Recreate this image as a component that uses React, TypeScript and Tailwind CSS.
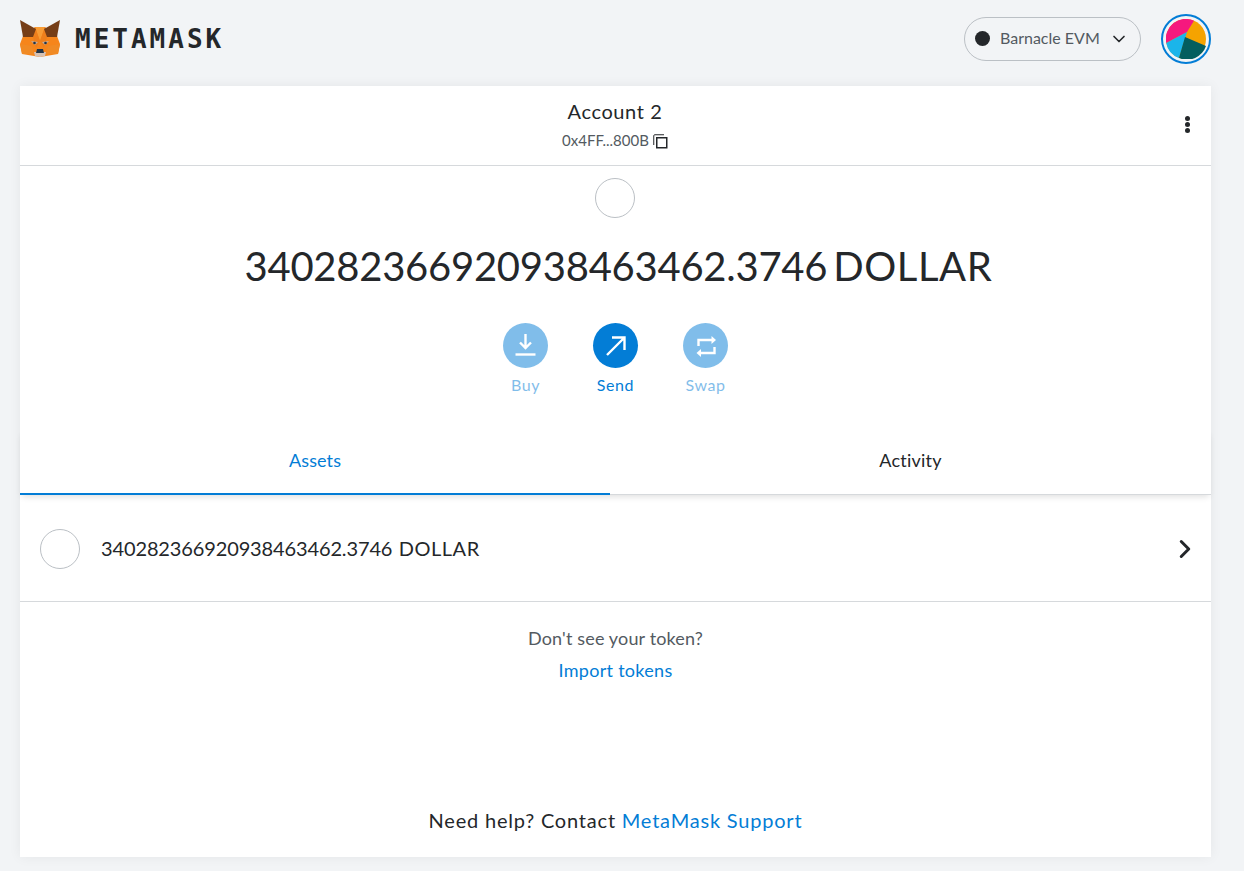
import { ChevronDown, ChevronRight } from 'lucide-react';

function FoxLogo() {
    return (
        <svg width="41" height="39" viewBox="0 0 41 39" className="shrink-0">
            {/* face */}
            <polygon points="3,17 15,8 25,8 37,17 40,25 38,35 26,37 20,38 14,37 2,35 0,25" fill="#f6851b" />
            <polygon points="15,8 25,8 20,22" fill="#f89c35" />
            <polygon points="13,18 15,8 20,22 16,29" fill="#ee7f1c" />
            <polygon points="27,18 25,8 20,22 24,29" fill="#ee7f1c" />
            <polygon points="0,25 12,27 14,35 2,35" fill="#f08a24" />
            <polygon points="40,25 28,27 26,35 38,35" fill="#f08a24" />
            {/* ears */}
            <polygon points="0,1 16,10 13,18 3,18" fill="#763d16" />
            <polygon points="40,1 24,10 27,18 37,18" fill="#763d16" />
            {/* eyes */}
            <polygon points="11,22 18,23 15,26" fill="#c0ad9e" />
            <polygon points="29,22 22,23 25,26" fill="#c0ad9e" />
            <circle cx="14.5" cy="24" r="1.3" fill="#233447" />
            <circle cx="25.5" cy="24" r="1.3" fill="#233447" />
            {/* muzzle */}
            <polygon points="14,33 26,33 25,37 20,38 15,37" fill="#d7c1b3" />
            <polygon points="16,34 24,34 23,30 17,30" fill="#233447" />
        </svg>
    );
}

function ActionButton({ label, active, children }: { label: string; active?: boolean; children: React.ReactNode }) {
    return (
        <div className={`flex w-[90px] flex-col items-center ${active ? '' : 'opacity-50'}`}>
            <div className="flex h-[45px] w-[45px] items-center justify-center rounded-full bg-[#037dd6]">
                {children}
            </div>
            <span className="mt-[6px] text-[16px] leading-[22px] tracking-[0.6px] text-[#037dd6]">{label}</span>
        </div>
    );
}

export default function App() {
    return (
        <div className="min-h-[871px] bg-[#f2f4f6] px-[20px] font-['Lato',sans-serif] text-[#24272a]">
            {/* top bar */}
            <header className="flex h-[86px] w-[1191px] items-center justify-between pb-[9px]">
                <div className="flex items-center gap-[14px]">
                    <FoxLogo />
                    <span className="mt-[1px] font-['DejaVu_Sans_Mono',monospace] text-[26px] font-bold leading-none tracking-[3px] text-[#24272a]">
                        METAMASK
                    </span>
                </div>
                <div className="flex items-center gap-[20px]">
                    <div className="flex h-[44px] w-[177px] items-center rounded-full border border-[#bbc0c5] pl-[10px] pr-[11px]">
                        <span className="h-[15px] w-[15px] rounded-full bg-[#24272a]" />
                        <span className="ml-[10px] flex-1 pb-[2px] text-[16px] text-[#535a61]">Barnacle EVM</span>
                        <ChevronDown className="h-[20px] w-[20px]" strokeWidth={2} />
                    </div>
                    <div className="flex h-[50px] w-[50px] items-center justify-center rounded-full border-2 border-[#037dd6]">
                        <svg width="40" height="40" viewBox="0 0 40 40">
                            <circle cx="20" cy="20" r="20" fill="#f5a300" />
                            <path d="M0.2 24 A20 20 0 0 1 28 1.7 L21 13 Z" fill="#f6187e" />
                            <path d="M0.2 24 L21 13 L13 39 A20 20 0 0 1 0.2 24 Z" fill="#1bb5ea" />
                            <path d="M13 39 L19 18 L40 27 A20 20 0 0 1 13 39 Z" fill="#035e5e" />
                        </svg>
                    </div>
                </div>
            </header>

            {/* main card */}
            <main className="flex h-[771px] w-[1191px] flex-col bg-white shadow-[0_0_12px_rgba(0,0,0,0.06)]">
                <div className="relative flex h-[80px] shrink-0 flex-col items-center border-b border-[#d6d9dc] pr-[1px] pt-[11px]">
                    <span className="text-[20px] leading-[28px] tracking-[0.6px]">Account 2</span>
                    <div className="mt-[5px] flex items-center gap-[4px] text-[15px] leading-[20px] text-[#535a61]">
                        <span>0x4FF...800B</span>
                        <svg width="15" height="15" viewBox="0 0 15 15" fill="none" stroke="#24272a" className="mt-[2px]">
                            <rect x="3.75" y="3.75" width="10" height="10" strokeWidth="1.5" />
                            <path d="M0.75 11V1.75A1 1 0 0 1 1.75 .75H11" strokeWidth="1" />
                        </svg>
                    </div>
                    <div className="absolute right-[21px] top-[30px] flex flex-col gap-[1px]">
                        <span className="h-[5px] w-[5px] rounded-full bg-[#24272a]" />
                        <span className="h-[5px] w-[5px] rounded-full bg-[#24272a]" />
                        <span className="h-[5px] w-[5px] rounded-full bg-[#24272a]" />
                    </div>
                </div>

                <div className="flex h-[263px] shrink-0 flex-col items-center pt-[12px]">
                    <div className="mr-[1px] h-[40px] w-[40px] rounded-full border border-[#bbc0c5]" />
                    <div className="mt-[24px] pl-[6px] text-[40px] leading-[48px] tracking-[-0.26px] [word-spacing:-4px]">
                        340282366920938463462.3746 <span className="tracking-[0.6px]">DOLLAR</span>
                    </div>
                    <div className="mt-[33px] flex">
                        <ActionButton label="Buy">
                            <svg width="22" height="24" viewBox="0 0 22 24" fill="none" stroke="white" strokeWidth="2.4">
                                <path d="M10.5 0V14M5 8.5L10.5 14L16 8.5" />
                                <path d="M0.5 20.5H20.5" />
                            </svg>
                        </ActionButton>
                        <ActionButton label="Send" active>
                            <svg width="22" height="22" viewBox="0 0 22 22" fill="none" stroke="white" strokeWidth="2.4">
                                <path d="M2 20L19 3M7 2.5H19.5V15" />
                            </svg>
                        </ActionButton>
                        <ActionButton label="Swap">
                            <svg width="22" height="22" viewBox="0 0 22 22" fill="none" stroke="white" strokeWidth="2.4">
                                <path d="M3.5 11V5H17" />
                                <path d="M16.5 1L21 5L16.5 9Z" fill="white" stroke="none" />
                                <path d="M19.5 12V18H5" />
                                <path d="M6 14L1.5 18L6 22Z" fill="white" stroke="none" />
                            </svg>
                        </ActionButton>
                    </div>
                </div>

                {/* tabs */}
                <div className="flex h-[66px] shrink-0 shadow-[0_4px_6px_-2px_rgba(0,0,0,0.12)]">
                    <div className="flex w-[590px] items-center justify-center border-b-2 border-[#037dd6] pb-[2px] text-[18px] tracking-[0.1px] text-[#037dd6]">Assets</div>
                    <div className="flex flex-1 items-center justify-center border-b border-[#d6d9dc] pb-[2px] text-[18px] tracking-[0.2px] text-[#24272a]">Activity</div>
                </div>

                <div className="flex h-[107px] shrink-0 items-center border-b border-[#d6d9dc] pl-[20px] pr-[11px] pt-[2px]">
                    <div className="h-[40px] w-[40px] rounded-full border border-[#bbc0c5]" />
                    <span className="ml-[21px] flex-1 pb-[2px] text-[20px] tracking-[-0.13px] [word-spacing:1.5px]">
                        340282366920938463462.3746 <span className="tracking-[0.5px]">DOLLAR</span>
                    </span>
                    <ChevronRight className="h-[30px] w-[30px]" strokeWidth={2.4} />
                </div>

                <div className="flex flex-1 flex-col items-center pt-[24px] text-[18px] leading-[24px]">
                    <span className="tracking-[0.15px] text-[#535a61]">Don't see your token?</span>
                    <span className="mt-[8px] tracking-[0.3px] text-[#037dd6]">Import tokens</span>
                    <div className="mb-[24px] mt-auto text-[20px] leading-[26px] tracking-[0.8px]">
                        Need help? Contact <span className="text-[#037dd6]">MetaMask Support</span>
                    </div>
                </div>
            </main>
        </div>
    );
}
